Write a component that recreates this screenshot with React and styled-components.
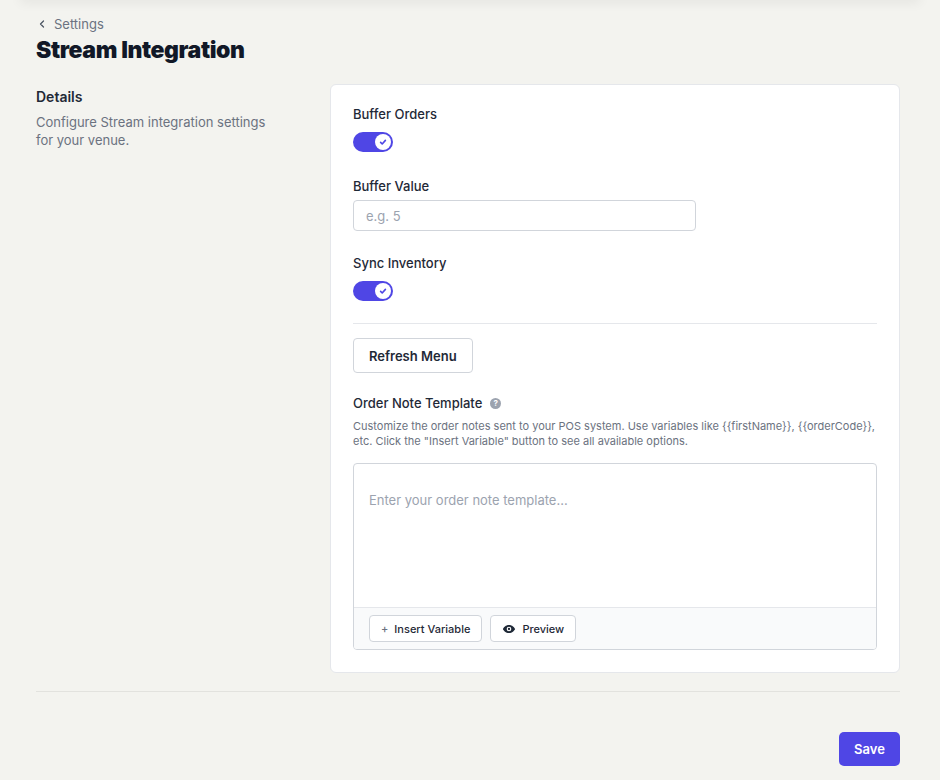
import styled, { createGlobalStyle } from "styled-components";

const Global = createGlobalStyle`
  body { margin: 0; background: #f3f3ef; font-family: Inter, "Liberation Sans", sans-serif; color: #1f2937; }
`;

const TopShade = styled.div`
  height: 8px;
  box-shadow: 0 2px 12px rgba(0, 0, 0, 0.08);
  margin: -8px 20px 0;
`;

const Page = styled.div`
  padding: 8px 40px 20px 36px;
`;

const Back = styled.div`
  display: flex;
  align-items: center;
  gap: 6px;
  font-size: 13px;
  color: #6b7280;
  margin-top: 8px;
  height: 16px;
`;

const Title = styled.h1`
  font-size: 23px;
  font-weight: 900;
  letter-spacing: -0.4px;
  color: #111827;
  margin: 4px 0 20px;
`;

const Layout = styled.div`
  display: grid;
  grid-template-columns: 294px 1fr;
  padding-bottom: 18px;
  border-bottom: 1px solid #e2e2de;
`;

const SideTitle = styled.h2`
  font-size: 14px;
  font-weight: 600;
  margin: 4px 0 8px;
`;

const SideText = styled.p`
  font-size: 13px;
  line-height: 18px;
  color: #6b7280;
  margin: 0;
  width: 250px;
`;

const Card = styled.div`
  background: #fff;
  border: 1px solid #e5e7eb;
  border-radius: 6px;
  padding: 21px 22px 22px;
`;

const Label = styled.div`
  display: flex;
  align-items: center;
  gap: 8px;
  font-size: 13px;
  font-weight: 500;
  color: #1f2937;
  margin-top: ${(p) => p.$mt || 0}px;
  margin-bottom: ${(p) => p.$mb || 10}px;
`;

const Toggle = styled.div`
  width: 40px;
  height: 20px;
  border-radius: 10px;
  background: #4f46e5;
  display: flex;
  align-items: center;
  justify-content: flex-end;
  padding: 0 2px;
  box-sizing: border-box;
  margin-bottom: ${(p) => p.$mb || 0}px;
`;

const Knob = styled.div`
  width: 16px;
  height: 16px;
  border-radius: 50%;
  background: #fff;
  display: flex;
  align-items: center;
  justify-content: center;
`;

const Input = styled.input`
  display: block;
  width: 343px;
  height: 31px;
  box-sizing: border-box;
  border: 1px solid #d1d5db;
  border-radius: 4px;
  padding: 0 12px;
  font-size: 13px;
  font-family: inherit;
  margin-bottom: 24px;
  &::placeholder { color: #9ca3af; }
`;

const Divider = styled.hr`
  border: 0;
  border-top: 1px solid #e5e7eb;
  margin: 22px 0 14px;
`;

const Button = styled.button`
  font-family: inherit;
  background: #fff;
  border: 1px solid #d1d5db;
  border-radius: 4px;
  color: #1f2937;
  display: inline-flex;
  align-items: center;
  gap: 6px;
  font-size: ${(p) => (p.$small ? 11 : 13)}px;
  font-weight: ${(p) => (p.$small ? 500 : 600)};
  height: ${(p) => (p.$small ? 27 : 35)}px;
  padding: 0 ${(p) => (p.$small ? 11 : 15)}px;
`;

const Plus = styled.span`
  color: #6b7280;
`;

const Help = styled.span`
  width: 11px;
  height: 11px;
  border-radius: 50%;
  background: #9ca3af;
  color: #fff;
  font-size: 8px;
  font-weight: 700;
  display: inline-flex;
  align-items: center;
  justify-content: center;
`;

const Hint = styled.p`
  font-size: 11px;
  line-height: 15px;
  color: #6b7280;
  margin: 0 0 14px;
`;

const Editor = styled.div`
  border: 1px solid #d1d5db;
  border-radius: 4px;
  overflow: hidden;
`;

const Area = styled.div`
  height: 144px;
  padding: 28px 15px 0;
  box-sizing: border-box;
  font-size: 13px;
  color: #9ca3af;
  border-bottom: 1px solid #e5e7eb;
`;

const EditorBar = styled.div`
  background: #f9fafb;
  display: flex;
  gap: 8px;
  padding: 7px 15px;
`;

const Footer = styled.div`
  display: flex;
  justify-content: flex-end;
  padding-top: 40px;
`;

const Save = styled.button`
  font-family: inherit;
  background: #4f46e5;
  color: #fff;
  border: 0;
  border-radius: 5px;
  height: 34px;
  width: 61px;
  font-size: 13px;
  font-weight: 600;
`;

const Check = () => (
  <Knob>
    <svg width="8" height="8" viewBox="0 0 10 10" fill="none" stroke="#4f46e5" strokeWidth="2" strokeLinecap="round" strokeLinejoin="round">
      <path d="M2 5.5l2 2L8 3" />
    </svg>
  </Knob>
);

export default function App() {
  return (
    <>
      <Global />
      <TopShade />
      <Page>
        <Back>
          <svg width="12" height="12" viewBox="0 0 24 24" fill="none" stroke="#4b5563" strokeWidth="2.5" strokeLinecap="round" strokeLinejoin="round">
            <path d="M15 18l-6-6 6-6" />
          </svg>
          Settings
        </Back>
        <Title>Stream Integration</Title>
        <Layout>
          <div>
            <SideTitle>Details</SideTitle>
            <SideText>Configure Stream integration settings for your venue.</SideText>
          </div>
          <Card>
            <Label>Buffer Orders</Label>
            <Toggle $mb={26}><Check /></Toggle>
            <Label $mb={6}>Buffer Value</Label>
            <Input placeholder="e.g. 5" />
            <Label>Sync Inventory</Label>
            <Toggle><Check /></Toggle>
            <Divider />
            <Button>Refresh Menu</Button>
            <Label $mt={22} $mb={8}>
              Order Note Template <Help>?</Help>
            </Label>
            <Hint>
              Customize the order notes sent to your POS system. Use variables like {"{{firstName}}"}, {"{{orderCode}}"}, etc. Click the "Insert Variable" button to see all available options.
            </Hint>
            <Editor>
              <Area>Enter your order note template...</Area>
              <EditorBar>
                <Button $small><Plus>+</Plus> Insert Variable</Button>
                <Button $small>
                  <svg width="14" height="14" viewBox="0 0 24 24" fill="#1f2937">
                    <path d="M12 5C6.5 5 2.7 9.2 1.5 12c1.2 2.8 5 7 10.5 7s9.3-4.2 10.5-7C21.3 9.2 17.5 5 12 5zm0 11a4 4 0 110-8 4 4 0 010 8zm0-6a2 2 0 100 4 2 2 0 000-4z" />
                  </svg>
                  Preview
                </Button>
              </EditorBar>
            </Editor>
          </Card>
        </Layout>
        <Footer>
          <Save>Save</Save>
        </Footer>
      </Page>
    </>
  );
}
